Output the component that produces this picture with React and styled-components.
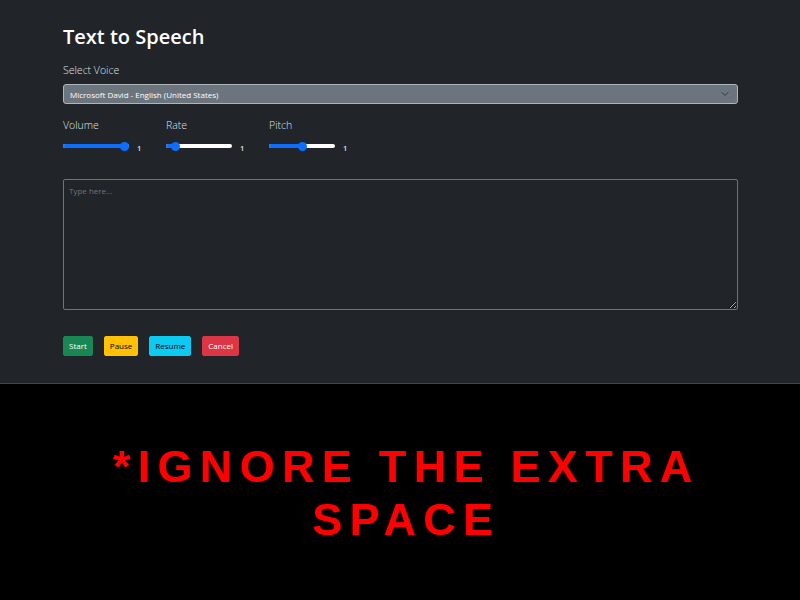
import React from "react";
import styled, { createGlobalStyle } from "styled-components";

const Global = createGlobalStyle`
  html, body { margin: 0; padding: 0; background: #000; }
  body { font-family: "Open Sans", "Noto Sans", sans-serif; }
  * { box-sizing: border-box; }
`;

const Panel = styled.div`
  background: #212529;
  border-bottom: 1px solid #b3141c;
  padding: 24px 62px 27px 63px;
  color: #dee2e6;
`;

const Title = styled.h1`
  margin: 0 0 14px;
  font-size: 20px;
  font-weight: 600;
  line-height: 25px;
  color: #fff;
`;

const Label = styled.div`
  font-size: 10.5px;
  line-height: 14px;
  font-weight: 300;
  color: #dee2e6;
  margin-bottom: ${(p) => p.$mb || 7}px;
`;

const SelectBox = styled.div`
  height: 20px;
  background: #6c757d;
  border: 1px solid #adb5bd;
  border-radius: 3px;
  display: flex;
  align-items: center;
  justify-content: space-between;
  padding: 0 8px 0 6px;
  font-size: 8px;
  font-weight: 500;
  color: #fff;
  margin-bottom: 14px;
`;

const Chevron = styled.svg`
  width: 8px;
  height: 8px;
`;

const SliderRow = styled.div`
  display: flex;
  margin-bottom: 26px;
`;

const SliderGroup = styled.div`
  width: 103px;
  display: flex;
  flex-direction: column;
`;

const SliderLine = styled.div`
  display: flex;
  align-items: center;
  gap: 8px;
  height: 14px;
`;

const Track = styled.div`
  position: relative;
  width: 66px;
  height: 4px;
  border-radius: 2px;
  background: #fff;
`;

const Fill = styled.div`
  height: 100%;
  border-radius: 2px;
  background: #0d6efd;
`;

const Thumb = styled.div`
  position: absolute;
  top: 50%;
  width: 9px;
  height: 9px;
  margin: -4.5px 0 0 -4.5px;
  border-radius: 50%;
  background: #0d6efd;
`;

const Value = styled.span`
  font-size: 7.5px;
  font-weight: 600;
  color: #dee2e6;
  padding-top: 3px;
`;

const TextArea = styled.textarea`
  display: block;
  width: 100%;
  height: 131px;
  background: #212529;
  border: 1px solid #6c757d;
  border-radius: 2px;
  padding: 5px 5px;
  font-family: "Open Sans", "Noto Sans", sans-serif;
  font-size: 8px;
  color: #dee2e6;
  resize: vertical;
  margin-bottom: 26px;
  outline: none;
  &::placeholder { color: #6c757d; }
`;

const Buttons = styled.div`
  display: flex;
  gap: 11px;
`;

const Btn = styled.button`
  height: 20px;
  padding: 0 5px;
  border: 1px solid ${(p) => p.$bg};
  border-radius: 2px;
  background: ${(p) => p.$bg};
  color: ${(p) => p.$fg};
  font-family: "Open Sans", "Noto Sans", sans-serif;
  font-size: 8px;
  line-height: 1;
`;

const Notice = styled.div`
  padding: 56px 0 0 12px;
  text-align: center;
  color: #ff0000;
  font-family: "Liberation Sans", Arial, sans-serif;
  font-weight: 700;
  font-size: 45px;
  line-height: 53px;
  letter-spacing: 7.3px;
`;

const sliders = [
  { label: "Volume", min: 0, max: 1, value: 1 },
  { label: "Rate", min: 0.1, max: 10, value: 1 },
  { label: "Pitch", min: 0, max: 2, value: 1 },
];

const buttons = [
  { label: "Start", bg: "#198754", fg: "#fff" },
  { label: "Pause", bg: "#ffc107", fg: "#000" },
  { label: "Resume", bg: "#0dcaf0", fg: "#000" },
  { label: "Cancel", bg: "#dc3545", fg: "#fff" },
];

function Slider({ label, min, max, value }) {
  const pct = (value - min) / (max - min);
  const pos = 4.5 + pct * 57;
  return (
    <SliderGroup>
      <Label $mb={7}>{label}</Label>
      <SliderLine>
        <Track>
          <Fill style={{ width: `${pos}px` }} />
          <Thumb style={{ left: `${pos}px` }} />
        </Track>
        <Value>{value}</Value>
      </SliderLine>
    </SliderGroup>
  );
}

export default function App() {
  return (
    <>
      <Global />
      <Panel>
        <Title>Text to Speech</Title>
        <Label $mb={7}>Select Voice</Label>
        <SelectBox>
          <span>Microsoft David - English (United States)</span>
          <Chevron viewBox="0 0 16 16">
            <path d="M2 5l6 6 6-6" fill="none" stroke="#343a40" strokeWidth="2" strokeLinecap="round" strokeLinejoin="round" />
          </Chevron>
        </SelectBox>
        <SliderRow>
          {sliders.map((s) => (
            <Slider key={s.label} {...s} />
          ))}
        </SliderRow>
        <TextArea placeholder="Type here..." />
        <Buttons>
          {buttons.map((b) => (
            <Btn key={b.label} $bg={b.bg} $fg={b.fg}>
              {b.label}
            </Btn>
          ))}
        </Buttons>
      </Panel>
      <Notice>
        *IGNORE THE EXTRA
        <br />
        SPACE
      </Notice>
    </>
  );
}
